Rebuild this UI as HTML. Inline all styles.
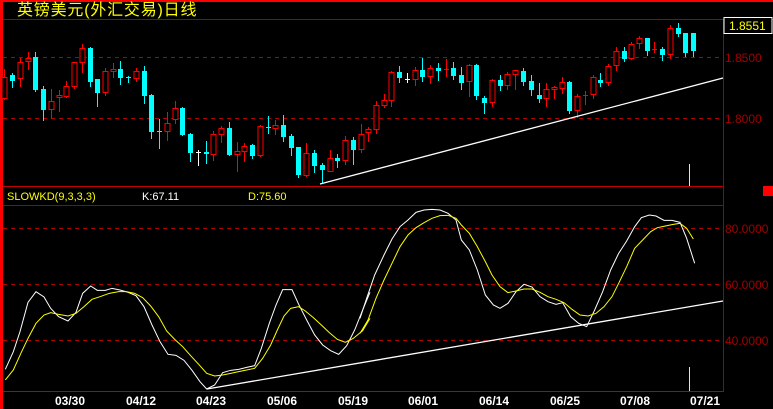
<!DOCTYPE html>
<html><head><meta charset="utf-8"><style>
html,body{margin:0;padding:0;background:#000;width:773px;height:409px;overflow:hidden}
svg{display:block}
text{font-family:"Liberation Sans","Noto Sans CJK SC",sans-serif}
</style></head><body>
<svg width="773" height="409" viewBox="0 0 773 409" xmlns="http://www.w3.org/2000/svg">
<rect width="773" height="409" fill="#000"/>
<rect x="0" y="0" width="773" height="2" fill="#f00"/>
<rect x="0" y="0" width="3" height="409" fill="#f00"/>
<line x1="3" y1="19.5" x2="773" y2="19.5" stroke="#a00000"/>
<line x1="3" y1="186.5" x2="723" y2="186.5" stroke="#c00000"/>
<line x1="3" y1="205.5" x2="723" y2="205.5" stroke="#a00000"/>
<line x1="3" y1="391.5" x2="723" y2="391.5" stroke="#c00000"/>
<line x1="723.5" y1="19" x2="723.5" y2="392" stroke="#a00000"/>
<rect x="763" y="186" width="10" height="10" fill="#f00"/>
<g stroke="#b00000" stroke-dasharray="4 4">
<line x1="3" y1="57.5" x2="723" y2="57.5"/>
<line x1="3" y1="118.5" x2="723" y2="118.5"/>
<line x1="3" y1="228.5" x2="723" y2="228.5"/>
<line x1="3" y1="284.5" x2="723" y2="284.5"/>
<line x1="3" y1="340.5" x2="723" y2="340.5"/>
</g>
<text x="17" y="15" fill="#ffff00" font-size="16" letter-spacing="0.8">英镑美元(外汇交易)日线</text>
<rect x="724" y="17.5" width="48" height="16" fill="#000" stroke="#fff"/>
<text x="729" y="30" fill="#ffff00" font-size="12">1.8551</text>
<g fill="#a00000" font-size="12">
<text x="725" y="62">1.8500</text>
<text x="725" y="123">1.8000</text>
<text x="725" y="233">80.0000</text>
<text x="725" y="289">60.0000</text>
<text x="725" y="345">40.0000</text>
</g>
<text x="7" y="200" fill="#ffff00" font-size="11">SLOWKD(9,3,3,3)</text>
<text x="142" y="200" fill="#fff" font-size="11">K:67.11</text>
<text x="248" y="200" fill="#ffff00" font-size="11">D:75.60</text>
<g fill="#fff" font-size="12" font-weight="bold" text-anchor="middle">
<text x="70" y="405">03/30</text><text x="141" y="405">04/12</text><text x="211" y="405">04/23</text>
<text x="282" y="405">05/06</text><text x="353" y="405">05/19</text><text x="423" y="405">06/01</text>
<text x="494" y="405">06/14</text><text x="565" y="405">06/25</text><text x="635" y="405">07/08</text>
<text x="705" y="405">07/21</text>
</g>
<path stroke="#00ffff" fill="none" d="M12.5 73V88M35.5 52V92M43.5 86V121M90.5 47V87M97.5 79V107M120.5 61V85M128.5 76V83M144.5 66V104M151.5 94V139M159.5 119V149M182.5 107V136M190.5 133V162M206.5 141V164M229.5 122V156M252.5 144V159M268.5 116V134M283.5 115V142M291.5 134V156M298.5 147V178M314.5 150V173M322.5 163V184M337.5 154V168M353.5 137V165M399.5 66V83M422.5 58V82M438.5 63V81M453.5 62V80M461.5 67V90M476.5 64V100M484.5 96V114M500.5 75V91M523.5 68V86M531.5 75V96M539.5 83V103M569.5 81V114M600.5 73V87M624.5 47V62M647.5 38V56M662.5 47V61M678.5 23V37M685.5 33V57M693.5 33V57"/>
<path stroke="#ff0000" fill="none" d="M4.5 69V100M20.5 58V87M28.5 52V70M51.5 89V119M59.5 90V112M66.5 81V98M74.5 62V89M82.5 44V73M105.5 68V96M113.5 63V78M136.5 68V82M167.5 112V141M175.5 101V124M213.5 131V161M221.5 126V143M237.5 142V172M244.5 143V162M260.5 125V157M275.5 120V135M306.5 143V177M330.5 150V172M345.5 136V165M361.5 124V153M368.5 127V142M376.5 101V134M384.5 94V108M391.5 71V107M415.5 67V86M430.5 65V84M446.5 59V77M469.5 64V97M492.5 79V107M507.5 72V90M515.5 70V90M546.5 83V107M554.5 86V99M562.5 77V94M577.5 94V118M585.5 91V105M593.5 75V99M608.5 64V86M616.5 47V71M631.5 42V60M639.5 36V49M654.5 42V53M670.5 25V59"/>
<path stroke="#fff" fill="none" d="M198.5 150V166M407.5 73V83"/>
<g fill="#00ffff">
<rect x="10" y="75" width="5" height="6"/><rect x="33" y="57" width="5" height="33"/><rect x="41" y="89" width="5" height="21"/>
<rect x="88" y="48" width="5" height="34"/><rect x="95" y="79" width="5" height="14"/><rect x="118" y="69" width="5" height="9"/>
<rect x="126" y="77" width="5" height="1"/><rect x="142" y="71" width="5" height="25"/><rect x="149" y="95" width="5" height="37"/>
<rect x="157" y="131" width="5" height="1"/><rect x="180" y="108" width="5" height="27"/><rect x="188" y="134" width="5" height="19"/>
<rect x="204" y="152" width="5" height="2"/><rect x="227" y="128" width="5" height="27"/><rect x="250" y="145" width="5" height="11"/>
<rect x="266" y="127" width="5" height="1"/><rect x="281" y="125" width="5" height="12"/><rect x="289" y="136" width="5" height="12"/>
<rect x="296" y="147" width="5" height="28"/><rect x="312" y="153" width="5" height="13"/><rect x="320" y="165" width="5" height="5"/>
<rect x="335" y="158" width="5" height="3"/><rect x="351" y="140" width="5" height="10"/><rect x="397" y="72" width="5" height="6"/>
<rect x="420" y="70" width="5" height="7"/><rect x="436" y="68" width="5" height="3"/><rect x="451" y="68" width="5" height="8"/>
<rect x="459" y="75" width="5" height="8"/><rect x="474" y="65" width="5" height="31"/><rect x="482" y="98" width="5" height="5"/>
<rect x="498" y="80" width="5" height="6"/><rect x="521" y="71" width="5" height="11"/><rect x="529" y="81" width="5" height="9"/>
<rect x="537" y="95" width="5" height="4"/><rect x="567" y="82" width="5" height="29"/><rect x="598" y="80" width="5" height="3"/>
<rect x="622" y="51" width="5" height="8"/><rect x="645" y="38" width="5" height="13"/><rect x="660" y="49" width="5" height="6"/>
<rect x="676" y="28" width="5" height="6"/><rect x="683" y="33" width="5" height="20"/><rect x="691" y="33" width="5" height="18"/>
</g>
<rect x="196" y="152" width="5" height="1" fill="#fff"/><rect x="405" y="79" width="5" height="1" fill="#fff"/>
<g fill="#000" stroke="#ff0000">
<rect x="2" y="77.5" width="5" height="21"/><rect x="18" y="62.5" width="5" height="16"/><rect x="26" y="58.5" width="5" height="3"/>
<rect x="49" y="101.5" width="5" height="8"/><rect x="57" y="95.5" width="5" height="2"/><rect x="64" y="86.5" width="5" height="10"/>
<rect x="72" y="62.5" width="5" height="24"/><rect x="80" y="48.5" width="5" height="14"/><rect x="103" y="71.5" width="5" height="21"/>
<rect x="111" y="69.5" width="5" height="2"/><rect x="134" y="71.5" width="5" height="7"/><rect x="165" y="123.5" width="5" height="8"/>
<rect x="173" y="108.5" width="5" height="11"/><rect x="211" y="134.5" width="5" height="20"/><rect x="219" y="128.5" width="5" height="6"/>
<rect x="235" y="151.5" width="5" height="3"/><rect x="242" y="146.5" width="5" height="5"/><rect x="258" y="126.5" width="5" height="29"/>
<rect x="273" y="125.5" width="5" height="3"/><rect x="304" y="153.5" width="5" height="22"/><rect x="328" y="158.5" width="5" height="13"/>
<rect x="343" y="140.5" width="5" height="20"/><rect x="359" y="134.5" width="5" height="15"/><rect x="366" y="129.5" width="5" height="3"/>
<rect x="374" y="105.5" width="5" height="24"/><rect x="382" y="100.5" width="5" height="5"/><rect x="389" y="72.5" width="5" height="28"/>
<rect x="413" y="70.5" width="5" height="9"/><rect x="428" y="68.5" width="5" height="8"/><rect x="467" y="65.5" width="5" height="16"/>
<rect x="490" y="80.5" width="5" height="22"/><rect x="505" y="74.5" width="5" height="11"/><rect x="513" y="70.5" width="5" height="4"/>
<rect x="544" y="89.5" width="5" height="9"/><rect x="552" y="87.5" width="5" height="2"/><rect x="560" y="82.5" width="5" height="6"/>
<rect x="575" y="96.5" width="5" height="14"/><rect x="591" y="77.5" width="5" height="17"/><rect x="606" y="66.5" width="5" height="16"/>
<rect x="614" y="51.5" width="5" height="14"/><rect x="629" y="44.5" width="5" height="14"/><rect x="637" y="38.5" width="5" height="5"/>
<rect x="668" y="28.5" width="5" height="26"/>
</g>
<g fill="#ff0000"><rect x="444" y="69" width="5" height="1"/><rect x="583" y="95" width="5" height="1"/><rect x="652" y="49" width="5" height="1"/></g>
<line x1="320" y1="184" x2="723" y2="78" stroke="#fff" stroke-width="1.3"/>
<line x1="207" y1="389" x2="723" y2="301" stroke="#fff" stroke-width="1.3"/>
<line x1="689.5" y1="164" x2="689.5" y2="186" stroke="#ffff00"/>
<line x1="689.5" y1="367" x2="689.5" y2="391" stroke="#ffff00"/>
<g transform="translate(0,205) scale(0.33333)" fill="none">
<polyline vector-effect="non-scaling-stroke" stroke="#fff" points="16,493 40,440 60,380 84,292 108,260 132,276 152,310 176,335 204,348 228,322 248,265 272,243 292,256 316,256 336,250 360,255 384,262 408,272 432,305 456,360 480,410 504,448 528,451 552,466 576,496 600,530 620,552 644,540 668,503 692,496 716,493 740,487 764,482 784,430 808,355 828,300 848,254 876,254 896,298 920,345 944,390 968,420 992,437 1016,448 1040,422 1064,375 1088,315 1110,262"/>
<polyline vector-effect="non-scaling-stroke" stroke="#ffff00" points="16,525 40,495 64,442 84,400 108,355 132,330 152,323 176,328 204,333 228,325 252,305 276,283 300,275 328,265 356,260 380,260 404,265 428,278 452,303 476,335 500,378 524,403 548,425 572,452 596,478 620,505 644,513 668,510 692,505 716,500 740,495 764,490 788,460 812,420 832,375 852,333 872,310 896,305 916,318 940,338 964,360 988,383 1012,403 1036,412 1060,400 1088,377 1110,340"/>
</g>
<g transform="translate(360,205) scale(0.33333)" fill="none">
<polyline vector-effect="non-scaling-stroke" stroke="#fff" points="0,340 20,280 44,210 72,150 96,102 120,65 144,45 168,22 192,15 216,13 240,15 264,25 288,45 304,105 328,135 352,195 376,270 400,300 420,310 444,295 468,260 492,238 516,246 540,275 564,290 588,298 608,293 632,335 656,355 680,365 704,315 728,260 752,195 776,145 800,108 824,65 844,38 868,30 888,33 912,46 936,46 960,52 980,100 1004,175"/>
<polyline vector-effect="non-scaling-stroke" stroke="#ffff00" points="0,385 24,345 48,280 72,225 96,175 120,125 144,90 168,68 192,53 216,40 240,32 264,31 288,40 304,60 328,85 352,125 376,170 396,210 420,245 444,263 468,258 492,252 516,252 540,262 564,275 588,283 612,293 636,313 660,330 684,333 708,325 732,305 756,275 776,235 800,185 824,130 848,105 872,80 892,68 916,63 940,58 960,55 980,70 1000,102"/>
</g>
</svg>
</body></html>
